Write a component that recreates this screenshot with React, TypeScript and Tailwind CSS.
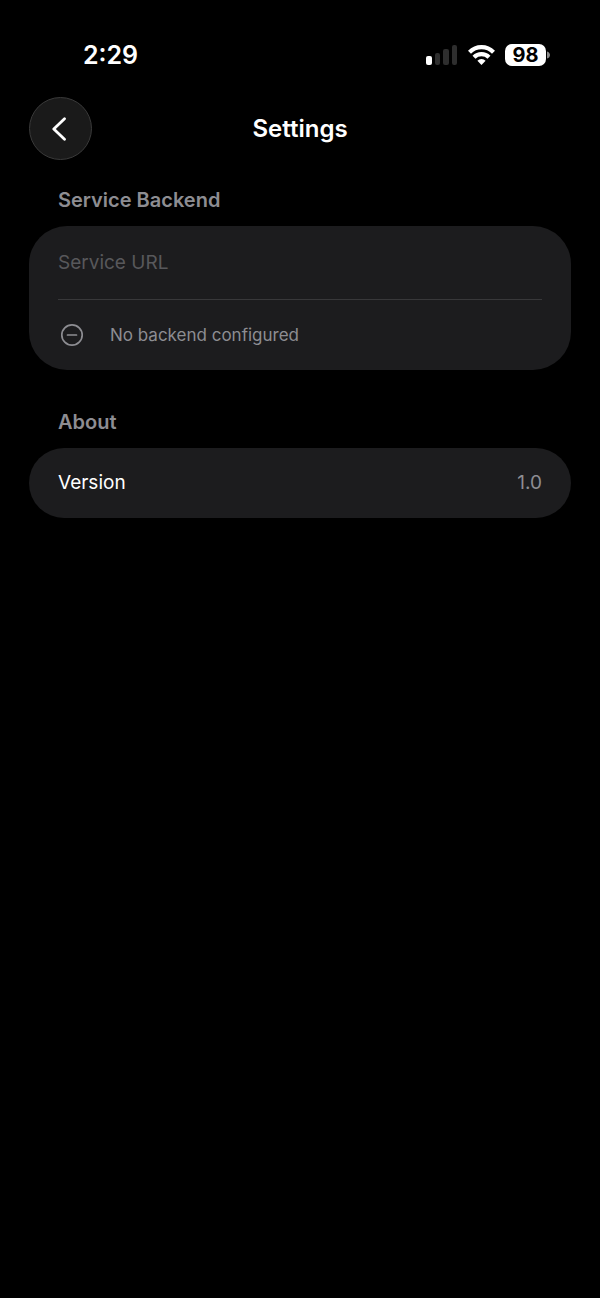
import React, { useState } from 'react';

function SignalIcon() {
  return (
    <svg width="32" height="20" viewBox="0 0 32 20" aria-hidden="true">
      <rect x="0" y="11" width="6" height="9" rx="2" fill="#ffffff" />
      <rect x="9" y="8" width="5" height="12" rx="2" fill="#2e2e2e" />
      <rect x="17" y="4" width="6" height="16" rx="2" fill="#2e2e2e" />
      <rect x="26" y="0" width="5" height="20" rx="2" fill="#2e2e2e" />
    </svg>
  );
}

function WifiIcon() {
  return (
    <svg width="27" height="20" viewBox="0 0 27 20" fill="none" stroke="#ffffff" strokeWidth="4.2" aria-hidden="true">
      <path d="M1.5 7.2C8.2 0.4 18.8 0.4 25.5 7.2" />
      <path d="M6 12.2a10.6 10.6 0 0 1 15 0" />
      <path d="M13.5 20l-4.1-4.2a5.8 5.8 0 0 1 8.2 0z" fill="#ffffff" stroke="none" />
    </svg>
  );
}

function BatteryIcon({ level }: { level: number }) {
  return (
    <div className="flex items-center gap-px">
      <div className="flex h-[22px] w-[41px] items-center justify-center rounded-[7px] bg-white text-[20px] leading-none font-bold text-black">
        {level}
      </div>
      <svg width="3" height="8" viewBox="0 0 3 8" aria-hidden="true">
        <path d="M0 0.5C4 1.5 4 6.5 0 7.5z" fill="#8a8a8a" />
      </svg>
    </div>
  );
}

function StatusBar() {
  return (
    <div className="flex items-center justify-between pt-[39px] pr-[50px] pb-[26px] pl-[83px]">
      <span className="text-[25px] leading-8 font-semibold">2:29</span>
      <div className="flex items-center gap-[10px]">
        <SignalIcon />
        <WifiIcon />
        <BatteryIcon level={98} />
      </div>
    </div>
  );
}

function Header() {
  return (
    <header className="grid grid-cols-[63px_1fr_63px] items-center">
      <button
        type="button"
        aria-label="Back"
        className="flex h-[63px] w-[63px] items-center justify-center rounded-full border border-[#3a3a3a] bg-[#1a1a1a]"
      >
        <svg width="18" height="24" viewBox="0 0 18 24" fill="none" stroke="#ffffff" strokeWidth="2.8" strokeLinecap="round" strokeLinejoin="round" aria-hidden="true">
          <path d="M12.5 1.8L1.8 12L12.5 22.2" />
        </svg>
      </button>
      <h1 className="text-center text-[24px] leading-8 font-semibold">Settings</h1>
    </header>
  );
}

function SectionTitle({ children }: { children: React.ReactNode }) {
  return <h2 className="mb-[14px] px-[29px] text-[20px] leading-6 font-semibold text-[#8d8d92]">{children}</h2>;
}

export default function App() {
  const [serviceUrl, setServiceUrl] = useState('');

  return (
    <div className="min-h-screen bg-black font-['Inter',sans-serif] text-white">
      <StatusBar />
      <div className="px-[29px]">
        <Header />
        <main className="flex flex-col gap-10 pt-7">
          <section>
            <SectionTitle>Service Backend</SectionTitle>
            <div className="rounded-[38px] bg-[#1c1c1e] px-[29px]">
              <input
                type="url"
                aria-label="Service URL"
                placeholder="Service URL"
                value={serviceUrl}
                onChange={(e) => setServiceUrl(e.target.value)}
                className="block h-[73px] w-full bg-transparent text-[19px] leading-6 outline-none placeholder:text-[#58585b]"
              />
              <div className="flex h-[71px] items-center gap-[26px] border-t border-[#38383a] pl-[2px] text-[#8d8d92]">
                <svg width="24" height="24" viewBox="0 0 24 24" fill="none" stroke="currentColor" strokeWidth="1.7" strokeLinecap="round" aria-hidden="true">
                  <circle cx="12" cy="12" r="10.2" />
                  <path d="M7.5 12h9" />
                </svg>
                <span className="text-[17px] leading-6">No backend configured</span>
              </div>
            </div>
          </section>

          <section>
            <SectionTitle>About</SectionTitle>
            <div className="flex h-[70px] items-center justify-between rounded-full bg-[#1c1c1e] px-[29px] text-[19px] leading-6">
              <span>Version</span>
              <span className="text-[#8d8d92]">1.0</span>
            </div>
          </section>
        </main>
      </div>
    </div>
  );
}
